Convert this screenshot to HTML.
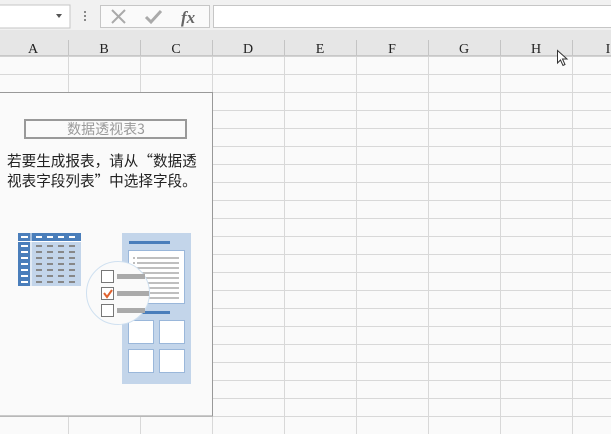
<!DOCTYPE html>
<html><head><meta charset="utf-8"><style>
html,body{margin:0;padding:0;width:611px;height:434px;overflow:hidden;background:#fafafa;font-family:"Liberation Sans","Noto Sans CJK SC",sans-serif}
</style></head><body>
<svg width="611" height="434" xmlns="http://www.w3.org/2000/svg" style="position:absolute;left:0;top:0">
<rect x="0" y="0" width="611" height="30" fill="#f1f1f1"/>
<rect x="-1" y="5" width="71" height="23" fill="#fff" stroke="#c6c6c6"/>
<path d="M56 14 L62 14 L59 18 Z" fill="#555"/>
<circle cx="85" cy="12" r="1" fill="#666"/><circle cx="85" cy="16" r="1" fill="#666"/><circle cx="85" cy="20" r="1" fill="#666"/>
<rect x="100.5" y="5.5" width="109" height="22" fill="#fafafa" stroke="#c6c6c6"/>
<path d="M112 10 L125 23 M125 10 L112 23" stroke="#aaa" stroke-width="2"/>
<path d="M146 17 L151 22 L161 11" stroke="#aaa" stroke-width="3" fill="none"/>
<text x="181" y="23" font-family="Liberation Serif" font-style="italic" font-weight="bold" font-size="17" fill="#666">fx</text>
<rect x="213.5" y="5.5" width="400" height="22" fill="#fff" stroke="#c6c6c6"/>
<rect x="0" y="30" width="611" height="26" fill="#e6e6e6"/>
<line x1="0" y1="56" x2="611" y2="56" stroke="#ababab"/>
<g stroke="#c4c4c4">
<line x1="68.5" y1="40" x2="68.5" y2="56"/><line x1="140.5" y1="40" x2="140.5" y2="56"/><line x1="212.5" y1="40" x2="212.5" y2="56"/><line x1="284.5" y1="40" x2="284.5" y2="56"/><line x1="356.5" y1="40" x2="356.5" y2="56"/><line x1="428.5" y1="40" x2="428.5" y2="56"/><line x1="500.5" y1="40" x2="500.5" y2="56"/><line x1="572.5" y1="40" x2="572.5" y2="56"/>
</g>
<g font-family="Liberation Serif" font-size="14" fill="#222" text-anchor="middle">
<text x="33" y="53">A</text><text x="104" y="53">B</text><text x="176" y="53">C</text><text x="248" y="53">D</text><text x="320" y="53">E</text><text x="392" y="53">F</text><text x="464" y="53">G</text><text x="536" y="53">H</text><text x="608" y="53">I</text>
</g>
<g stroke="#d8d8d8">
<path d="M68.5 57V434M140.5 57V434M212.5 57V434M284.5 57V434M356.5 57V434M428.5 57V434M500.5 57V434M572.5 57V434"/>
<path d="M0 74.5H611M0 92.5H611M0 110.5H611M0 128.5H611M0 146.5H611M0 164.5H611M0 182.5H611M0 200.5H611M0 218.5H611M0 236.5H611M0 254.5H611M0 272.5H611M0 290.5H611M0 308.5H611M0 326.5H611M0 344.5H611M0 362.5H611M0 380.5H611M0 398.5H611M0 416.5H611"/>
</g>
<rect x="-2" y="92.5" width="214.5" height="323.5" fill="#fafafa" stroke="#999"/>
<rect x="25" y="120" width="161" height="18" fill="none" stroke="#999" stroke-width="2"/>
<text x="106" y="134" font-size="14" fill="#999" text-anchor="middle" font-family="Noto Sans CJK SC,sans-serif">数据透视表3</text>
<text x="7" y="166" font-size="14.6" fill="#222" font-family="Noto Sans CJK SC,sans-serif">若要生成报表，请从“数据透</text>
<text x="7" y="186" font-size="14.6" fill="#222" font-family="Noto Sans CJK SC,sans-serif">视表字段列表”中选择字段。</text>
<!-- table icon -->
<rect x="18" y="233" width="63" height="53" fill="#c3d5ea"/>
<rect x="18" y="233" width="63" height="8" fill="#4a7ebb"/>
<rect x="18" y="233" width="12" height="53" fill="#4a7ebb"/>
<line x1="31" y1="233" x2="31" y2="286" stroke="#fff"/><line x1="18" y1="241.5" x2="81" y2="241.5" stroke="#fff"/>
<g stroke="#fff" stroke-width="2"><path d="M21 237H28M36 237H42M47 237H53M58 237H64M69 237H75"/>
<path d="M21 246H28M21 252H28M21 258H28M21 264H28M21 270H28M21 276H28M21 282H28"/></g>
<g stroke="#888" stroke-width="2"><path d="M36 246H42M47 246H53M58 246H64M69 246H75M36 252H42M47 252H53M58 252H64M69 252H75M36 258H42M47 258H53M58 258H64M69 258H75M36 264H42M47 264H53M58 264H64M69 264H75M36 270H42M47 270H53M58 270H64M69 270H75M36 276H42M47 276H53M58 276H64M69 276H75M36 282H42M47 282H53M58 282H64M69 282H75"/></g>
<!-- right panel -->
<rect x="122" y="233" width="69" height="151" fill="#c3d5ea"/>
<rect x="129" y="241" width="41" height="3" fill="#4a7ebb"/>
<rect x="128.5" y="250.5" width="56" height="53" fill="#fff" stroke="#9ab7da"/>
<g stroke="#aaa" stroke-width="1.5"><path d="M133 258h2M137 258h42M133 263h2M137 263h42M137 268h42M137 273h42M137 278h42M137 283h42M137 288h42M137 293h42M137 298h42"/></g>
<rect x="129" y="311" width="41" height="3" fill="#4a7ebb"/>
<rect x="128.5" y="320.5" width="25" height="23" fill="#fff" stroke="#9ab7da"/>
<rect x="159.5" y="320.5" width="25" height="23" fill="#fff" stroke="#9ab7da"/>
<rect x="128.5" y="349.5" width="25" height="23" fill="#fff" stroke="#9ab7da"/>
<rect x="159.5" y="349.5" width="25" height="23" fill="#fff" stroke="#9ab7da"/>
<!-- magnifier -->
<circle cx="118" cy="293" r="31.5" fill="#fafafa" stroke="#cfe0f0"/>
<g fill="#fff" stroke="#777" stroke-width="1"><rect x="101.5" y="270.5" width="12" height="12"/><rect x="101.5" y="287.5" width="12" height="12"/><rect x="101.5" y="304.5" width="12" height="12"/></g>
<path d="M104 293 L107 297 L112 290" stroke="#e0622f" stroke-width="2" fill="none"/>
<g fill="#aaa"><rect x="117" y="274" width="28" height="5"/><rect x="117" y="291" width="32" height="5"/><rect x="117" y="308" width="28" height="5"/></g>
<!-- cursor -->
<path d="M557.5 50.5 V63 L560.5 60 L563 65.5 L565 64.5 L562.5 59 H567 Z" fill="#fff" stroke="#333"/>
</svg>
</body></html>
